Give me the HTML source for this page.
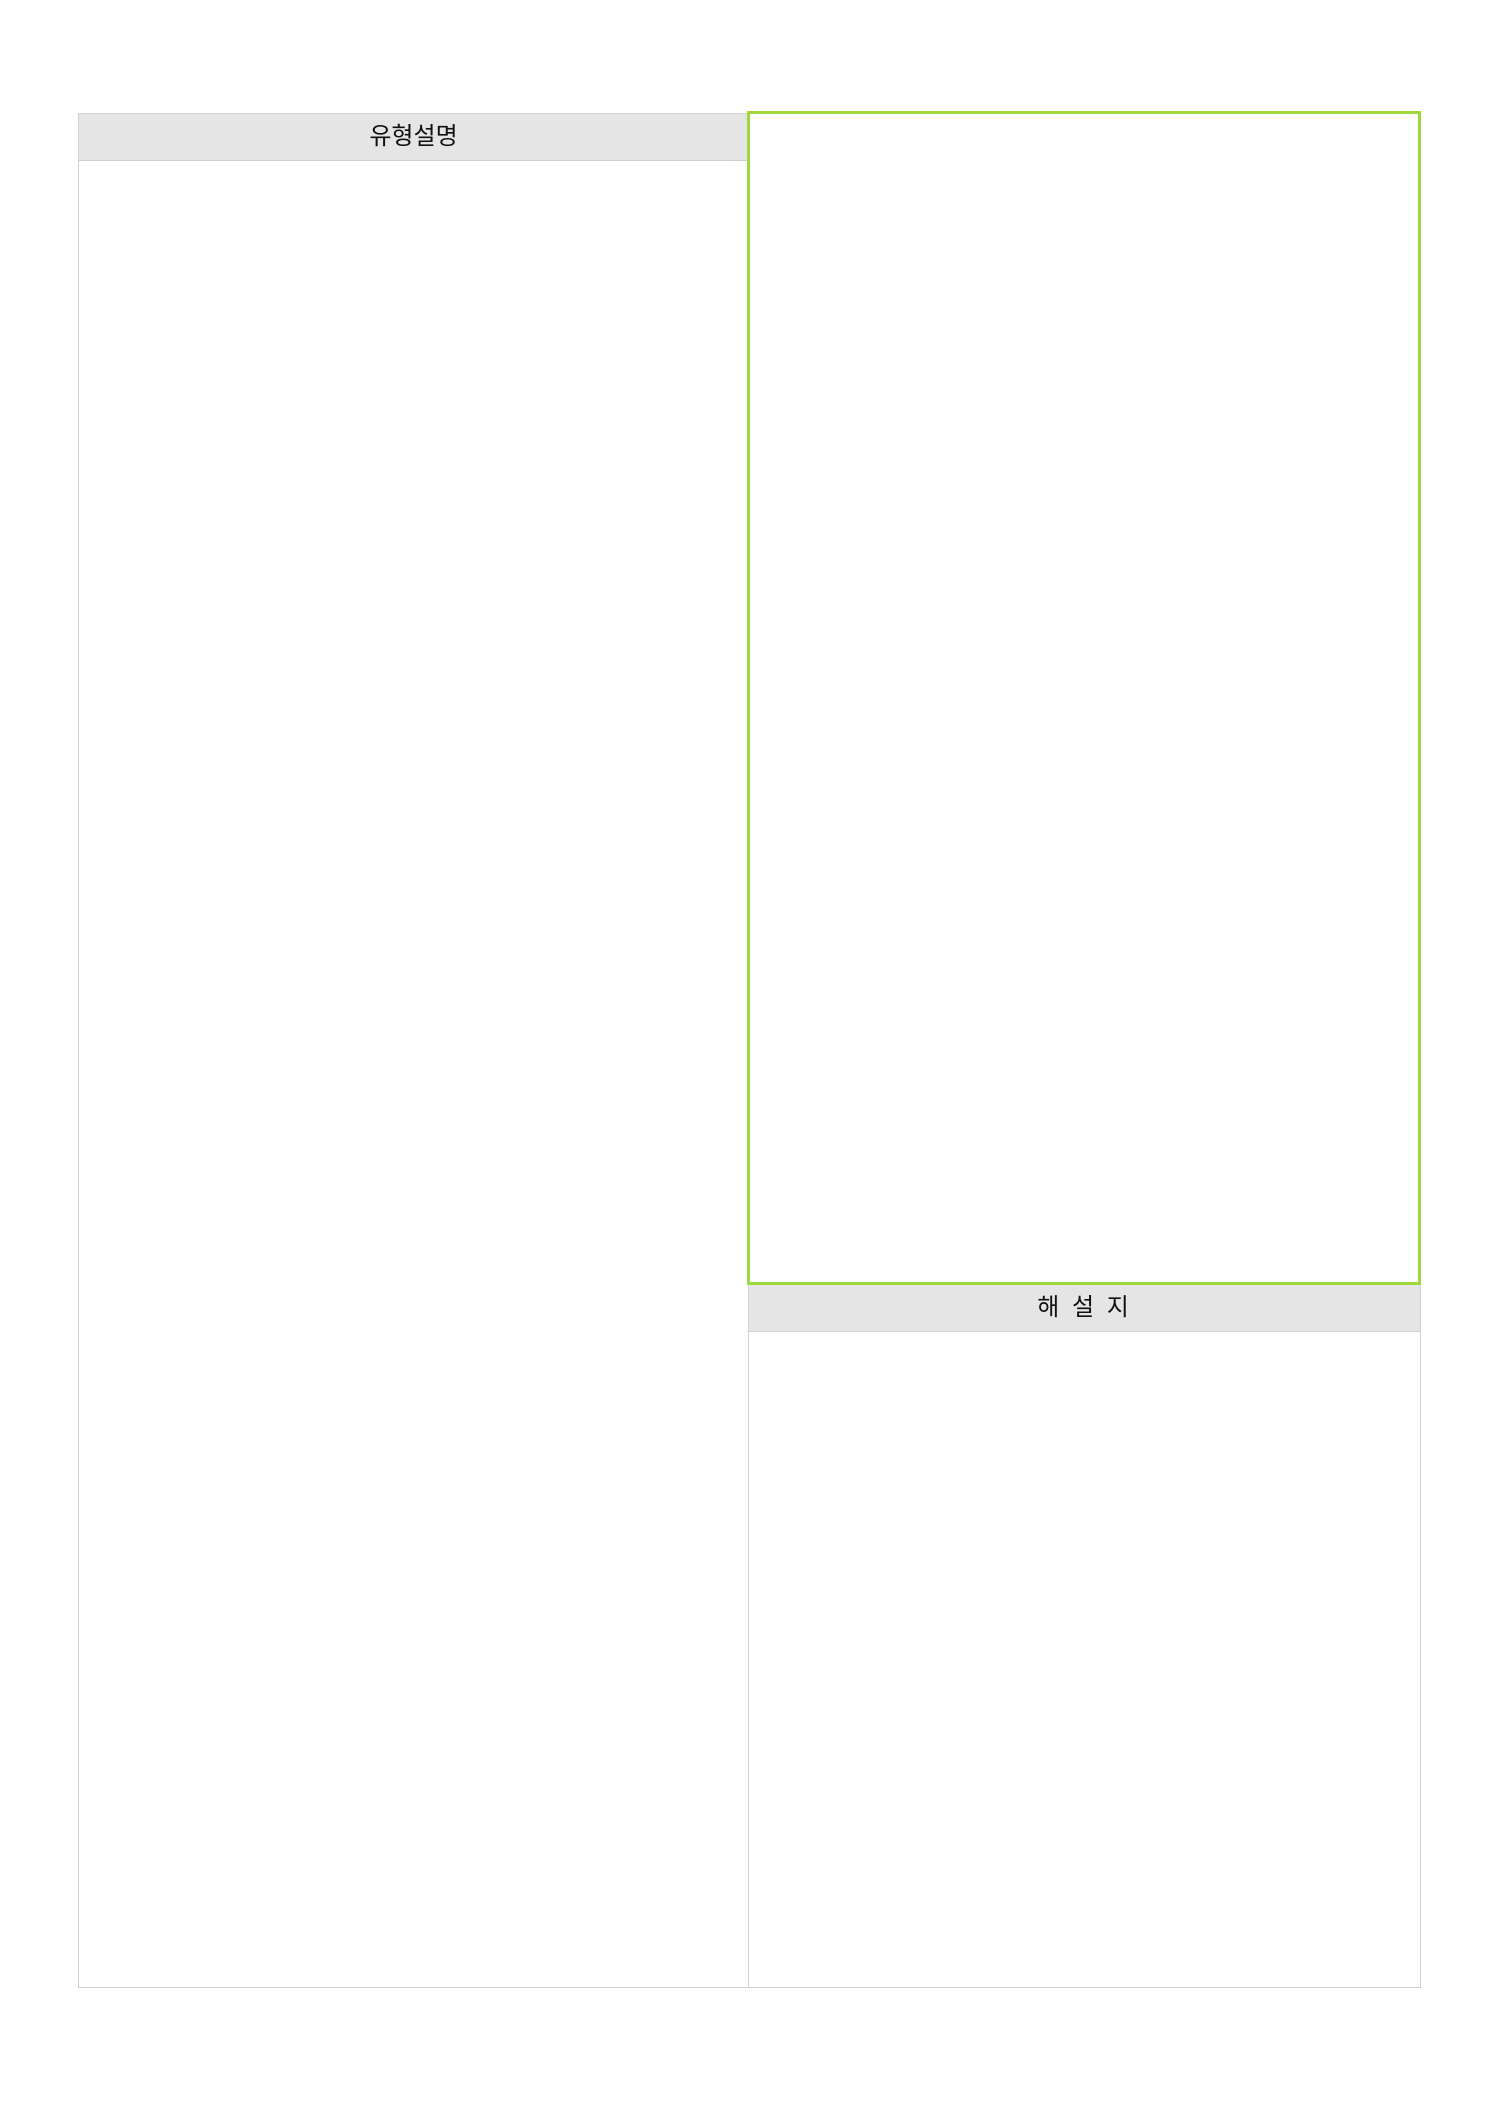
<!DOCTYPE html>
<html><head><meta charset="utf-8"><style>
body{margin:0;width:1488px;height:2105px;background:#fff;position:relative;font-family:"Liberation Sans","Noto Sans CJK KR",sans-serif;}
.b{position:absolute;box-sizing:border-box;}
.h{background:#e5e5e5;border:1px solid #d0d0d0;text-align:center;color:#111;font-size:24px;}
</style></head><body>
<div class="b" style="left:78px;top:113px;width:671px;height:1875px;border:1px solid #d0d0d0;"></div>
<div class="b h" style="left:78px;top:113px;width:671px;height:48px;line-height:46px;">유형설명</div>
<div class="b" style="left:748px;top:1284px;width:673px;height:704px;border:1px solid #d0d0d0;"></div>
<div class="b h" style="left:748px;top:1284px;width:673px;height:48px;line-height:46px;letter-spacing:3px;">해 설 지</div>
<div class="b" style="left:747px;top:111px;width:674px;height:1174px;border:3px solid #9ed83a;"></div>
</body></html>
